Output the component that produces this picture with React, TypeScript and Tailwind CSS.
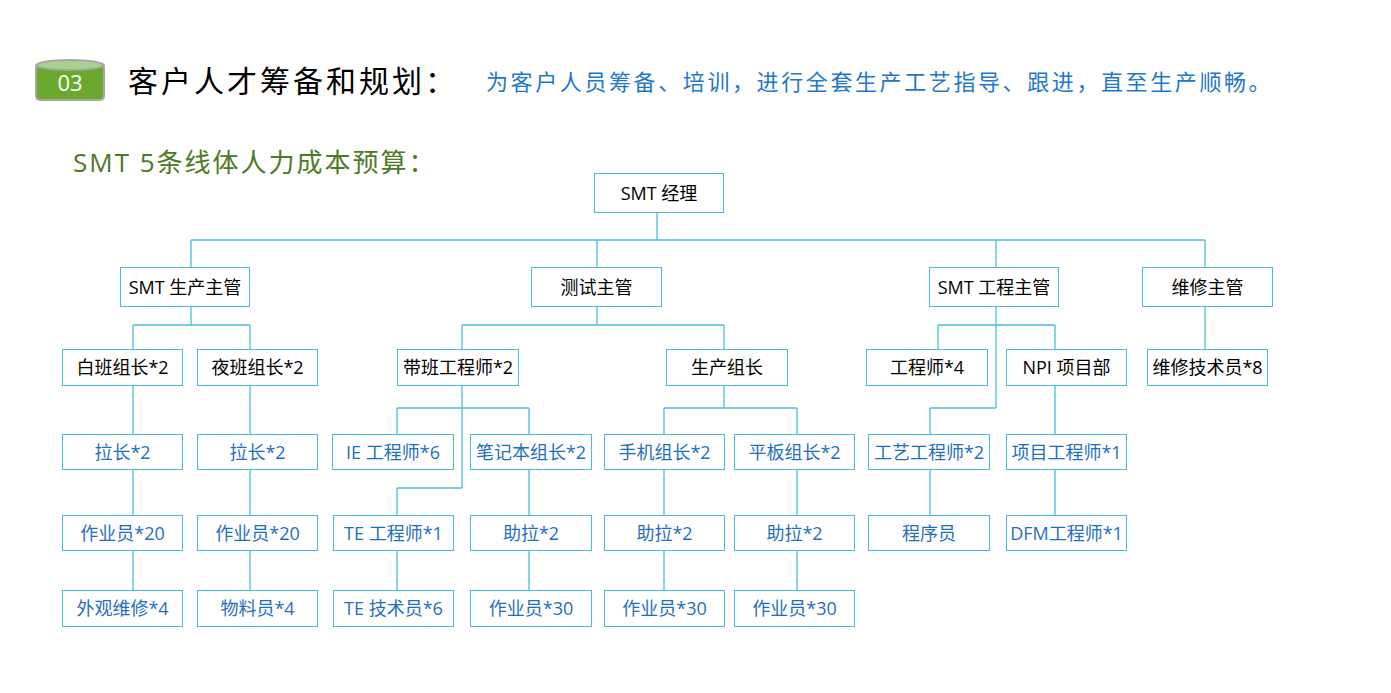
const F = '"Open Sans","Noto Sans CJK SC",sans-serif';
type N = [string, number, number, number, number, boolean?];
const nodes: N[] = [
  ['SMT 经理', 594, 173, 130, 40, true],
  ['SMT 生产主管', 120, 267, 130, 40, true],
  ['测试主管', 531, 267, 131, 40, true],
  ['SMT 工程主管', 929, 267, 130, 40, true],
  ['维修主管', 1142, 267, 131, 40, true],
  ['白班组长*2', 62, 349, 121, 37, true],
  ['夜班组长*2', 197, 349, 121, 37, true],
  ['带班工程师*2', 397, 349, 122, 37, true],
  ['生产组长', 666, 349, 122, 37, true],
  ['工程师*4', 866, 349, 122, 37, true],
  ['NPI 项目部', 1006, 349, 121, 37, true],
  ['维修技术员*8', 1147, 349, 121, 37, true],
  ['拉长*2', 62, 434, 121, 36], ['拉长*2', 197, 434, 121, 36],
  ['IE 工程师*6', 332, 434, 122, 36], ['笔记本组长*2', 470, 434, 122, 36],
  ['手机组长*2', 604, 434, 121, 36], ['平板组长*2', 734, 434, 121, 36],
  ['工艺工程师*2', 868, 434, 122, 36], ['项目工程师*1', 1006, 434, 121, 36],
  ['作业员*20', 62, 515, 121, 36], ['作业员*20', 197, 515, 121, 36],
  ['TE 工程师*1', 333, 515, 121, 36], ['助拉*2', 470, 515, 122, 36],
  ['助拉*2', 604, 515, 121, 36], ['助拉*2', 734, 515, 121, 36],
  ['程序员', 868, 515, 122, 36], ['DFM工程师*1', 1006, 515, 121, 36],
  ['外观维修*4', 62, 590, 121, 37], ['物料员*4', 197, 590, 121, 37],
  ['TE 技术员*6', 333, 590, 121, 37], ['作业员*30', 470, 590, 122, 37],
  ['作业员*30', 604, 590, 121, 37], ['作业员*30', 734, 590, 121, 37],
];
const lines = [
  'M657 213V240M191 240H1205M191 240V267M597 240V267M996 240V267M1205 240V267',
  'M191 307V325M133 325H250M133 325V349M250 325V349',
  'M597 307V325M462 325H724M462 325V349M724 325V349',
  'M996 307V408M938 325H1055M938 325V349M1055 325V349M930 408H996M930 408V434',
  'M1205 307V349',
  'M133 386V590M250 386V590',
  'M462 386V488M397 408H529M397 408V434M529 408V590M397 488H462M397 488V515M397 551V590',
  'M724 386V408M664 408H797M664 408V590M797 408V590',
  'M930 470V515M1055 386V434M1055 470V515',
];
export default function App() {
  return (
    <div className="relative w-[1391px] h-[693px] bg-white overflow-hidden" style={{ fontFamily: F }}>
      <div className="flex items-center pt-[57px] pl-[34px]">
        <svg width="72" height="48" viewBox="0 0 72 48">
          <rect x="1" y="6" width="70" height="38" rx="5" fill="#a6a6a6" />
          <rect x="3" y="9" width="66" height="33" rx="4" fill="#6aa82e" />
          <ellipse cx="36" cy="8" rx="35" ry="6" fill="#a6a6a6" />
          <ellipse cx="36" cy="8" rx="32" ry="4" fill="#a9d18e" />
          <text x="36" y="34" textAnchor="middle" fill="#fff" fontSize="22" fontFamily={F}>03</text>
        </svg>
        <div className="ml-[22px] text-[30px] tracking-[3px] text-black leading-none">客户人才筹备和规划：</div>
        <div className="ml-[28px] text-[22px] tracking-[2.6px] text-[#1f78c8] leading-none">为客户人员筹备、培训，进行全套生产工艺指导、跟进，直至生产顺畅。</div>
      </div>
      <div className="mt-[44px] ml-[73px] text-[26px] tracking-[2px] text-[#4d7a22] leading-none">SMT 5条线体人力成本预算：</div>
      <svg className="absolute left-0 top-0" width="1391" height="693">
        {lines.map((d, i) => <path key={i} d={d} stroke="#4bbdd9" strokeWidth="1.3" fill="none" />)}
      </svg>
      {nodes.map(([t, x, y, w, h, dark], i) => (
        <div key={i} className={`absolute flex items-center justify-center border border-[#4bbdd9] bg-white text-[18px] whitespace-nowrap ${dark ? 'text-black' : 'text-[#1f6fc0]'}`}
          style={{ left: x, top: y, width: w, height: h }}>{t}</div>
      ))}
    </div>
  );
}
